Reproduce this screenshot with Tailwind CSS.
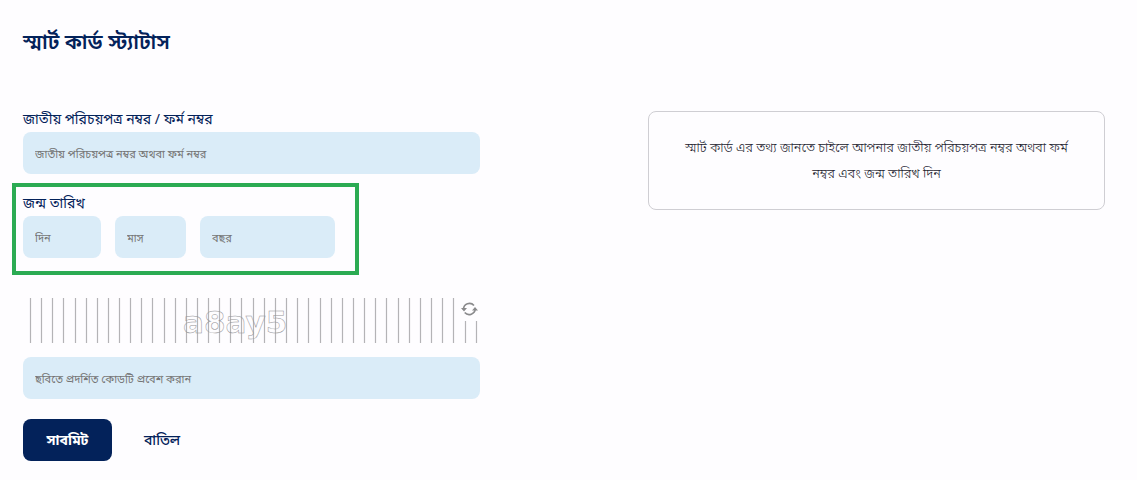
<!DOCTYPE html>
<html lang="bn">
  <head>
    <meta charset="utf-8" />
    <meta name="viewport" content="width=device-width, initial-scale=1" />
    <title>স্মার্ট কার্ড স্ট্যাটাস</title>
    <script src="https://cdn.jsdelivr.net/npm/@tailwindcss/browser@4"></script>
  </head>
  <body class="bg-[#fefdff] text-[#03225a] font-['Noto_Sans_Bengali','Noto_Sans',sans-serif]">
    <main class="pt-[26px] pb-4 pl-[23px] pr-8">
      <h1 class="text-[21px] leading-9 font-semibold mb-11">স্মার্ট কার্ড স্ট্যাটাস</h1>

      <div class="grid grid-cols-2 gap-[168px] items-start">
        <form onsubmit="return false">
          <label for="nid" class="block pt-1 text-sm/[22px]">জাতীয় পরিচয়পত্র নম্বর / ফর্ম নম্বর</label>
          <input id="nid" type="text" placeholder="জাতীয় পরিচয়পত্র নম্বর অথবা ফর্ম নম্বর" class="block w-full h-[42px] px-3 pt-[3px] rounded-lg bg-[#daecf8] text-[11px] placeholder:text-[#757575]" />

          <!-- Date of birth -->
          <div role="group" aria-labelledby="dob" class="relative mt-4">
            <label id="dob" for="day" class="block pt-1 text-sm/[22px]">জন্ম তারিখ</label>
            <div class="flex gap-[14px] w-[312px]">
              <input id="day" type="text" placeholder="দিন" class="w-[78px] h-[42px] px-3 pt-[3px] rounded-lg bg-[#daecf8] text-[11px] placeholder:text-[#757575]" />
              <input type="text" aria-label="মাস" placeholder="মাস" class="w-[71px] h-[42px] px-3 pt-[3px] rounded-lg bg-[#daecf8] text-[11px] placeholder:text-[#757575]" />
              <input type="text" aria-label="বছর" placeholder="বছর" class="flex-1 min-w-0 h-[42px] px-3 pt-[3px] rounded-lg bg-[#daecf8] text-[11px] placeholder:text-[#757575]" />
            </div>
            <div class="absolute -left-[11px] -top-[7px] -bottom-[17px] w-[347px] border-4 border-[#2bab53] pointer-events-none"></div>
          </div>

          <!-- Captcha -->
          <div class="relative mt-10">
            <svg viewBox="0 0 457 45" class="block w-full" role="img" aria-label="captcha">
              <path d="M7.5 0v45M18.5 0v45M29.5 0v45M40.5 0v45M52.5 0v45M63.5 0v45M74.5 0v45M85.5 0v45M96.5 0v45M107.5 0v45M118.5 0v45M129.5 0v45M141.5 0v45M152.5 0v45M163.5 0v45M174.5 0v45M185.5 0v45M196.5 0v45M207.5 0v45M218.5 0v45M230.5 0v45M241.5 0v45M252.5 0v45M263.5 0v45M274.5 0v45M285.5 0v45M297.5 0v45M308.5 0v45M319.5 0v45M330.5 0v45M341.5 0v45M352.5 0v45M363.5 0v45M375.5 0v45M386.5 0v45M397.5 0v45M408.5 0v45M419.5 0v45M430.5 0v45M442.5 0v45M453.5 0v45" stroke="#b4b3b6" stroke-width="1.2" fill="none" />
              <text x="160" y="35" font-family="DejaVu Sans" font-weight="bold" font-size="31" fill="none" stroke="#949497" stroke-width="0.5">a8ay5</text>
            </svg>
            <button type="button" aria-label="রিফ্রেশ" class="absolute right-0 top-0 w-[22px] h-[23px] bg-[#fefdff] text-[#8a8a8c]">
              <svg viewBox="0 0 22 23" class="block w-full">
                <path d="M5.500 11.500a6 6 0 0 1 10.500-4M17.200 10.500a6 6 0 0 1-10.500 4" fill="none" stroke="currentColor" stroke-width="1.6" />
                <path d="M14 12.500h6l-3-3.500zM3 10h6l-3 3.500z" fill="currentColor" />
              </svg>
            </button>
          </div>
          <input type="text" aria-label="কোড" placeholder="ছবিতে প্রদর্শিত কোডটি প্রবেশ করান" class="block w-full h-[42px] mt-[14px] px-3 pt-[3px] rounded-lg bg-[#daecf8] text-[11px] placeholder:text-[#757575]" />

          <div class="flex mt-5">
            <button type="submit" class="w-[89px] h-[42px] pt-[3px] rounded-lg bg-[#03225a] text-white text-sm font-bold">সাবমিট</button>
            <button type="reset" class="h-[42px] px-8 pt-[3px] text-sm font-medium">বাতিল</button>
          </div>
        </form>

        <div class="mt-[5px] px-6 pt-6 pb-[21px] border border-[#cfced3] rounded-lg text-center text-[13px]/[26px] font-light text-[#20202c]">
          স্মার্ট কার্ড এর তথ্য জানতে চাইলে আপনার জাতীয় পরিচয়পত্র নম্বর অথবা ফর্ম নম্বর এবং জন্ম তারিখ দিন
        </div>
      </div>
    </main>
  </body>
</html>
